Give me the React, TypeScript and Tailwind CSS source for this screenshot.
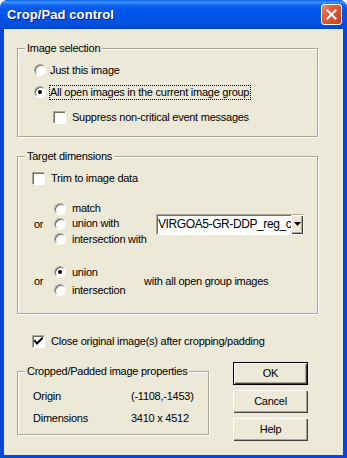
import type { ReactNode } from "react";

const sunken =
  "border border-t-[#ACA899] border-l-[#ACA899] border-r-white border-b-white shadow-[inset_1px_1px_0_#716F64]";

function Radio({ checked }: { checked?: boolean }) {
  return (
    <span
      className={`flex h-3 w-3 shrink-0 items-center justify-center rounded-full bg-white ${sunken}`}
    >
      {checked && <span className="h-[4px] w-[4px] rounded-full bg-black" />}
    </span>
  );
}

function Checkbox({ checked }: { checked?: boolean }) {
  return (
    <span
      className={`flex h-[13px] w-[13px] shrink-0 items-center justify-center bg-white ${sunken}`}
    >
      {checked && (
        <svg width="9" height="9" viewBox="0 0 9 9">
          <path d="M1 4 L3 6.5 L8 1.5" stroke="black" strokeWidth="2" fill="none" strokeLinecap="square" />
        </svg>
      )}
    </span>
  );
}

function Group({
  label,
  className,
  children,
}: {
  label: string;
  className: string;
  children: ReactNode;
}) {
  return (
    <div
      className={`relative shrink-0 border border-[#ACA899] shadow-[inset_1px_1px_0_#fff,1px_1px_0_#fff] ${className}`}
    >
      <span className="absolute -top-[8px] left-[7px] bg-[#ECE9D8] px-[2px] leading-[14px]">
        {label}
      </span>
      {children}
    </div>
  );
}

function Button({ label, primary }: { label: string; primary?: boolean }) {
  return (
    <div
      className={`flex h-[23px] w-[75px] items-center justify-center bg-[#ECE9D8] shadow-[inset_1px_1px_0_#fff,inset_-1px_-1px_0_#404040,inset_-2px_-2px_0_#ACA899] ${
        primary ? "border border-black" : ""
      }`}
    >
      {label}
    </div>
  );
}

export default function App() {
  return (
    <div className="h-[458px] w-[347px] overflow-hidden rounded-t-[8px] bg-[#0846D8] font-['Liberation_Sans',Arial,sans-serif] text-[11px] tracking-[-0.25px] text-black">
      {/* title bar */}
      <div className="flex h-[29px] items-center bg-[linear-gradient(to_bottom,#0A5EF0_0px,#3D95FF_2px,#1467F2_5px,#0058EE_9px,#0053E4_20px,#004BD6_27px,#0041C8_29px)] pl-[7px] pr-[5px]">
        <span className="flex-1 pt-[1px] text-[13px] font-bold tracking-[0.1px] text-white [text-shadow:1px_1px_0_#0A1E8C]">
          Crop/Pad control
        </span>
        <div className="flex h-[21px] w-[21px] items-center justify-center rounded-[3px] border border-white bg-[linear-gradient(135deg,#EE8A6A_0%,#E35A35_40%,#C9401E_100%)]">
          <svg width="11" height="11" viewBox="0 0 11 11">
            <path d="M1.5 1.5 L9.5 9.5 M9.5 1.5 L1.5 9.5" stroke="white" strokeWidth="2" strokeLinecap="square" />
          </svg>
        </div>
      </div>

      {/* body */}
      <div className="mx-[4px] flex h-[426px] flex-col bg-[#ECE9D8] pl-[13px]">
        <Group label="Image selection" className="mt-[19px] h-[89px] w-[301px]">
          <div className="flex flex-col pl-[16px] pt-[13px]">
            <div className="flex h-4 items-center">
              <Radio />
              <span className="ml-[4px]">Just this image</span>
            </div>
            <div className="mt-[6px] flex h-4 items-center">
              <Radio checked />
              <span className="ml-[3px] border border-dotted border-black pr-[1px] leading-[13px]">
                All open images in the current image group
              </span>
            </div>
            <div className="mt-[9px] flex h-4 items-center pl-[19px]">
              <Checkbox />
              <span className="ml-[6px]">Suppress non-critical event messages</span>
            </div>
          </div>
        </Group>

        <Group label="Target dimensions" className="mt-[19px] h-[158px] w-[301px]">
          <div className="flex flex-col pt-[13px]">
            <div className="flex h-4 items-center pl-[14px]">
              <Checkbox />
              <span className="ml-[6px]">Trim to image data</span>
            </div>
            <div className="mt-[15px] flex items-center pl-[16px]">
              <span className="w-[20px]">or</span>
              <div className="flex w-[102px] flex-col">
                <div className="flex h-[15px] items-center">
                  <Radio />
                  <span className="ml-[6px]">match</span>
                </div>
                <div className="flex h-[15px] items-center">
                  <Radio />
                  <span className="ml-[6px]">union with</span>
                </div>
                <div className="flex h-4 items-center">
                  <Radio />
                  <span className="ml-[6px]">intersection with</span>
                </div>
              </div>
              <div className={`flex h-[21px] w-[148px] items-center bg-white ${sunken}`}>
                <span className="flex-1 overflow-hidden whitespace-nowrap pl-[1px] text-[12px] tracking-[-0.4px]">
                  VIRGOA5-GR-DDP_reg_c
                </span>
                <div className="flex h-[19px] w-[12px] shrink-0 items-center justify-center bg-[#ECE9D8] shadow-[inset_1px_1px_0_#fff,inset_-1px_-1px_0_#404040,inset_-2px_-2px_0_#ACA899]">
                  <svg width="7" height="4" viewBox="0 0 7 4">
                    <path d="M0 0 H7 L3.5 4 Z" fill="black" />
                  </svg>
                </div>
              </div>
            </div>
            <div className="mt-[17px] flex items-center pl-[16px]">
              <span className="w-[20px]">or</span>
              <div className="flex w-[90px] flex-col gap-[2px]">
                <div className="flex h-4 items-center">
                  <Radio checked />
                  <span className="ml-[6px]">union</span>
                </div>
                <div className="flex h-4 items-center">
                  <Radio />
                  <span className="ml-[6px]">intersection</span>
                </div>
              </div>
              <span>with all open group images</span>
            </div>
          </div>
        </Group>

        <div className="mt-[19px] flex h-4 items-center pl-[15px]">
          <Checkbox checked />
          <span className="ml-[6px]">Close original image(s) after cropping/padding</span>
        </div>

        <div className="mt-[13px] flex items-start">
          <Group label="Cropped/Padded image properties" className="mt-[9px] h-[64px] w-[192px]">
            <div className="flex flex-col gap-[6px] pl-[15px] pt-[16px]">
              <div className="flex h-4 items-center">
                <span className="w-[98px]">Origin</span>
                <span>(-1108,-1453)</span>
              </div>
              <div className="flex h-4 items-center">
                <span className="w-[98px]">Dimensions</span>
                <span>3410 x 4512</span>
              </div>
            </div>
          </Group>
          <div className="ml-[24px] flex flex-col gap-[5px]">
            <Button label="OK" primary />
            <Button label="Cancel" />
            <Button label="Help" />
          </div>
        </div>
      </div>
    </div>
  );
}
